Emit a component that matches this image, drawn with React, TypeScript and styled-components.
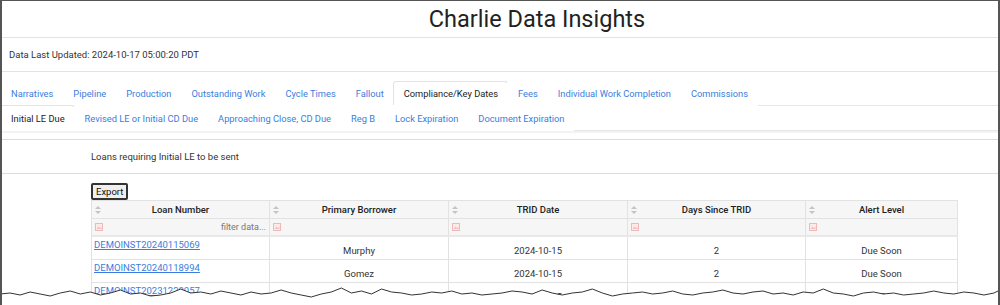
import styled, { createGlobalStyle } from 'styled-components';

const GlobalStyle = createGlobalStyle`
  html, body {
    margin: 0;
    padding: 0;
    background: #fff;
  }
  body {
    font-family: Roboto, "Liberation Sans", Arial, sans-serif;
    color: #222;
  }
  * {
    box-sizing: border-box;
  }
`;

const Frame = styled.div`
  position: relative;
  width: 1000px;
  height: 305px;
  border: 1px solid #555;
  border-bottom: 0;
  border-left-width: 2px;
  border-right-width: 2px;
  overflow: hidden;
  background: #fff;
`;

const Header = styled.div`
  height: 37px;
  display: flex;
  align-items: center;
  justify-content: center;
  padding-left: 74px;
  border-bottom: 1px solid #e3e3e3;
`;

const Title = styled.h1`
  margin: 0;
  font-size: 23.5px;
  font-weight: 400;
  color: #222;
  line-height: 28px;
`;

const UpdatedBar = styled.div`
  height: 34px;
  display: flex;
  align-items: center;
  padding-left: 7px;
  font-size: 9.5px;
  color: #333;
  border-bottom: 1px solid #e3e3e3;
`;

const TabRow = styled.div<{ $h: number }>`
  display: flex;
  align-items: flex-end;
  height: ${(p) => p.$h}px;
  border-bottom: 1px solid #e6e6e6;
  margin-left: -2px;
`;

const Tab = styled.div<{ $active?: boolean; $h: number }>`
  height: ${(p) => p.$h}px;
  display: flex;
  align-items: center;
  padding: 0 9px 0 10px;
  font-size: 9.3px;
  color: ${(p) => (p.$active ? '#222' : '#3b7ddd')};
  background: #fff;
  border: 1px solid ${(p) => (p.$active ? '#e3e3e3' : 'transparent')};
  border-bottom-color: ${(p) => (p.$active ? '#fff' : 'transparent')};
  border-radius: 3px 3px 0 0;
  margin-bottom: -1px;
  margin-right: -1px;
  white-space: nowrap;
`;

const SubGap = styled.div`
  height: 9px;
  border-bottom: 1px solid #dcdcdc;
  border-top: 2px solid #f3f3f3;
`;

const Note = styled.div`
  height: 34px;
  display: flex;
  align-items: center;
  padding-left: 89px;
  font-size: 9.5px;
  color: #333;
  border-bottom: 1px solid #dcdcdc;
`;

const Content = styled.div`
  padding: 9px 0 0 89px;
`;

const ExportButton = styled.button`
  font-family: Roboto, "Liberation Sans", Arial, sans-serif;
  font-size: 9.5px;
  color: #111;
  height: 17px;
  padding: 0 3px;
  background: #efefef;
  border: 2px solid #333;
  border-radius: 2px;
  line-height: 11px;
  display: block;
`;

const Table = styled.div`
  width: 867px;
  border-top: 1px solid #e2e2e2;
  display: grid;
  grid-template-columns: 179px 179px 179px 178px 152px;
`;

const HeadCell = styled.div`
  position: relative;
  height: 18px;
  display: flex;
  align-items: center;
  justify-content: center;
  font-size: 9.5px;
  font-weight: 500;
  color: #222;
  background: #f6f6f6;
  border-right: 1px solid #e2e2e2;
  border-bottom: 1px solid #e2e2e2;
  &:first-child {
    border-left: 1px solid #e2e2e2;
  }
`;

const SortIcon = styled.svg`
  position: absolute;
  left: 3px;
  top: 5px;
`;

const FilterCell = styled.div<{ $first?: boolean }>`
  height: 18px;
  display: flex;
  align-items: center;
  justify-content: space-between;
  padding: 0 3px;
  background: #f6f6f6;
  border-right: 1px solid #e2e2e2;
  border-bottom: 2px solid #e8e8e8;
  border-left: ${(p) => (p.$first ? '1px solid #e2e2e2' : '0')};
`;

const Placeholder = styled.span`
  font-size: 9px;
  color: #777;
`;

const Cell = styled.div<{ $first?: boolean }>`
  height: 23px;
  display: flex;
  align-items: ${(p) => (p.$first ? 'flex-start' : 'center')};
  justify-content: ${(p) => (p.$first ? 'flex-start' : 'center')};
  padding: ${(p) => (p.$first ? '2px 2px 0' : '5px 0 0')};
  font-size: 9.5px;
  color: #333;
  border-right: 1px solid #e2e2e2;
  border-bottom: 1px solid #e2e2e2;
  border-left: ${(p) => (p.$first ? '1px solid #e2e2e2' : '0')};
`;

const LoanLink = styled.a`
  color: #3b7ddd;
  text-decoration: underline;
  font-size: 9.5px;
`;

const Torn = styled.svg`
  position: absolute;
  left: -2px;
  bottom: 0;
`;

const SortArrows = () => (
  <SortIcon width="6" height="8" viewBox="0 0 6 8">
    <path d="M3 0 L6 3 L0 3 Z" fill="#c4c4c4" />
    <path d="M3 8 L6 5 L0 5 Z" fill="#c4c4c4" />
  </SortIcon>
);

const ClearIcon = () => (
  <svg width="8" height="8" viewBox="0 0 8 8">
    <rect x="0.5" y="0.5" width="7" height="7" fill="#fdeaea" stroke="#f0b8b8" />
    <path d="M1.5 6 L3.5 3.5 L5 5 L6.5 4 L6.5 6 Z" fill="#f3c3c3" />
  </svg>
);

const mainTabs = [
  'Narratives',
  'Pipeline',
  'Production',
  'Outstanding Work',
  'Cycle Times',
  'Fallout',
  'Compliance/Key Dates',
  'Fees',
  'Individual Work Completion',
  'Commissions',
];

const subTabs = [
  'Initial LE Due',
  'Revised LE or Initial CD Due',
  'Approaching Close, CD Due',
  'Reg B',
  'Lock Expiration',
  'Document Expiration',
];

const columns = ['Loan Number', 'Primary Borrower', 'TRID Date', 'Days Since TRID', 'Alert Level'];

const rows = [
  ['DEMOINST20240115069', 'Murphy', '2024-10-15', '2', 'Due Soon'],
  ['DEMOINST20240118994', 'Gomez', '2024-10-15', '2', 'Due Soon'],
  ['DEMOINST20231228057', 'Hamilton', '2024-10-15', '2', 'Due Soon'],
];

// jagged edge across the bottom, like a torn page
const tornPoints = (() => {
  const ys = [13, 12, 14, 11, 13, 15, 12, 10, 13, 11, 14, 12, 9, 13, 12, 15, 14, 12, 8, 12, 11, 13, 10, 12, 14, 11,
    13, 12, 9, 12, 14, 16, 13, 11, 7, 12, 10, 13, 8, 11, 12, 14, 13, 11, 12, 10, 13, 12, 14, 13, 12, 10, 11, 13, 9,
    12, 14, 12, 11, 8, 12, 15, 13, 12, 11, 13, 12, 10, 13, 14, 12, 11, 9, 12, 13, 11, 10, 13, 12, 14, 11, 12, 8, 12,
    13, 15, 12, 11, 13, 12, 14, 13, 12, 10, 12, 13, 11, 12, 14, 12, 7];
  return ys.map((y, i) => `${(i * 1004) / (ys.length - 1)},${y}`).join(' ');
})();

export default function App() {
  return (
    <>
      <GlobalStyle />
      <Frame>
        <Header>
          <Title>Charlie Data Insights</Title>
        </Header>
        <UpdatedBar>Data Last Updated: 2024-10-17 05:00:20 PDT</UpdatedBar>
        <TabRow $h={34}>
          {mainTabs.map((t) => (
            <Tab key={t} $h={25} $active={t === 'Compliance/Key Dates'}>
              {t}
            </Tab>
          ))}
        </TabRow>
        <TabRow $h={25}>
          {subTabs.map((t) => (
            <Tab key={t} $h={26} $active={t === 'Initial LE Due'}>
              {t}
            </Tab>
          ))}
        </TabRow>
        <SubGap />
        <Note>Loans requiring Initial LE to be sent</Note>
        <Content>
          <ExportButton>Export</ExportButton>
          <Table>
            {columns.map((c) => (
              <HeadCell key={c}>
                <SortArrows />
                {c}
              </HeadCell>
            ))}
            {columns.map((c, i) => (
              <FilterCell key={c} $first={i === 0}>
                <ClearIcon />
                {i === 0 && <Placeholder>filter data...</Placeholder>}
              </FilterCell>
            ))}
            {rows.map((r) =>
              r.map((v, i) => (
                <Cell key={r[0] + i} $first={i === 0}>
                  {i === 0 ? <LoanLink href="#">{v}</LoanLink> : v}
                </Cell>
              )),
            )}
          </Table>
        </Content>
        <Torn width="1004" height="24" viewBox="0 0 1004 24">
          <polygon points={`0,24 ${tornPoints} 1004,24`} fill="#fff" />
          <polyline points={tornPoints} fill="none" stroke="#333" strokeWidth="1" />
        </Torn>
      </Frame>
    </>
  );
}
